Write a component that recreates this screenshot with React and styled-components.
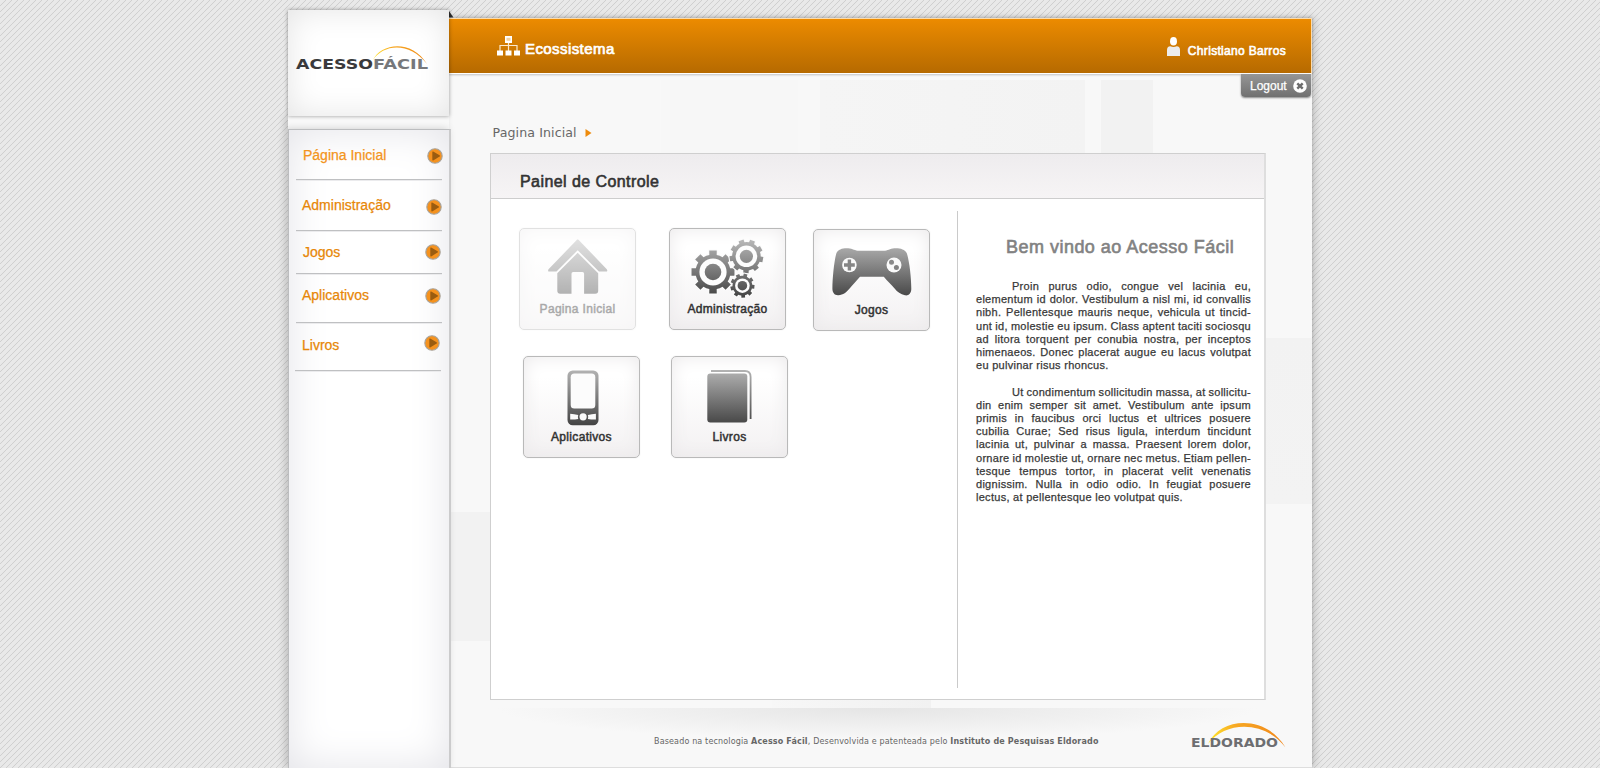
import React from "react";
import styled, { createGlobalStyle } from "styled-components";

const sans = `"Liberation Sans", Arial, sans-serif`;
const verdana = `"DejaVu Sans", Verdana, sans-serif`;

const GlobalStyle = createGlobalStyle`
  * { box-sizing: border-box; }
  html, body { margin: 0; padding: 0; }
  body { font-family: ${sans}; }
  p, h1, h2, ul { margin: 0; padding: 0; font-weight: normal; }
`;

const Page = styled.div`
  height: 768px;
  overflow: hidden;
  background: linear-gradient(135deg, #e9e9e9 41%, #d0d0d0 50%, #e9e9e9 59%) 0 0 / 6px 6px;
`;

const Shell = styled.div`
  display: flex;
  width: 1024px;
  height: 768px;
  margin: 0 auto;
`;

const LeftColumn = styled.div`
  position: relative;
  z-index: 1;
  width: 161px;
  padding-top: 10px;
  display: flex;
  flex-direction: column;
`;

const LogoCard = styled.div`
  height: 106px;
  display: flex;
  align-items: flex-start;
  padding: 30px 0 0 5px;
  background: #fff;
  box-shadow: inset 0 0 32px #e4e4e4, 0 0 4px rgba(0, 0, 0, 0.4);
  z-index: 1;
`;

const LogoGap = styled.div`
  height: 13px;
  background: #f9f9f9;
  box-shadow: -3px 0 7px rgba(0, 0, 0, 0.18);
`;

const Sidebar = styled.nav`
  flex: 1;
  width: 163px;
  padding-left: 7px;
  border: solid #bcbdbf;
  border-width: 1px 0 0 1px;
  border-right: 2px solid #cbcbcc;
  background: #fff;
  box-shadow: inset 0 0 42px #e3e3e8, -3px 0 8px rgba(0, 0, 0, 0.18);
`;

const NavItem = styled.div`
  display: flex;
  justify-content: space-between;
  align-items: flex-start;
  width: 146px;
  height: ${(p) => p.$height}px;
  margin-left: ${(p) => p.$shift || 0}px;
  border-bottom: 1px solid #bfc0c2;
  box-shadow: 0 1px 0 #ebebed;
`;

const NavLabel = styled.span`
  padding: ${(p) => p.$top}px 0 0 ${(p) => p.$left}px;
  font-size: 14px;
  line-height: 16px;
  color: ${(p) => (p.$light ? "#f39420" : "#e78708")};
  -webkit-text-stroke: 0.25px currentColor;
`;

const NavArrow = styled.svg`
  width: 16px;
  height: 16px;
  margin: ${(p) => p.$top}px ${(p) => p.$right}px 0 0;
`;

const Main = styled.main`
  position: relative;
  width: 863px;
  height: 750px;
  margin-top: 18px;
  display: flex;
  flex-direction: column;
  box-shadow: 3px 0 8px rgba(0, 0, 0, 0.16), 0 -1px 3px rgba(0, 0, 0, 0.16);
  background:
    linear-gradient(90deg, #f5f5f5, #f3f3f3) 371px 62px / 265px 73px no-repeat,
    linear-gradient(#f2f2f2, #f2f2f2) 652px 62px / 52px 73px no-repeat,
    linear-gradient(#f7f7f7, #f7f7f7) 212px 62px / 137px 73px no-repeat,
    linear-gradient(#f2f2f2, #f3f3f3) 815px 320px / 48px 166px no-repeat,
    linear-gradient(#f2f2f2, #f2f2f2) 0 494px / 41px 129px no-repeat,
    linear-gradient(90deg, #f7f7f7, #f1f1f1) 323px 680px / 159px 10px no-repeat,
    #f8f8f8;
`;

const Fold = styled.svg`
  position: absolute;
  left: 0;
  top: -7px;
  width: 5px;
  height: 7px;
`;

const TopBar = styled.header`
  height: 56px;
  display: flex;
  align-items: flex-start;
  border: solid #fbdcae;
  border-width: 1px 1px 1px 0;
  border-bottom-color: #fff;
  background: linear-gradient(#ec8b00, #b66a00);
  box-shadow: 0 1px 2px rgba(0, 0, 0, 0.22);
`;

const Section = styled.div`
  display: flex;
  gap: 5px;
  padding: 17px 0 0 48px;
`;

const SectionName = styled.span`
  padding-top: 3px;
  font-size: 15px;
  line-height: 20px;
  letter-spacing: 0.42px;
  color: #fff;
  -webkit-text-stroke: 0.7px #fff;
`;

const User = styled.div`
  display: flex;
  gap: 8px;
  margin-left: auto;
  padding: 18px 25px 0 0;
`;

const UserName = styled.span`
  padding-top: 7px;
  font-size: 12px;
  line-height: 15px;
  letter-spacing: 0.32px;
  color: #fff;
  -webkit-text-stroke: 0.6px #fff;
`;

const LogoutButton = styled.button`
  align-self: flex-end;
  display: flex;
  align-items: center;
  justify-content: space-between;
  width: 70px;
  height: 23px;
  margin-right: 1px;
  padding: 0 4px 0 9px;
  border: 0;
  border-radius: 0 0 4px 4px;
  background: linear-gradient(#969696, #707070);
  box-shadow: 0 1px 2px rgba(0, 0, 0, 0.45);
  font: 12px/14px ${sans};
  color: #fff;
  -webkit-text-stroke: 0.25px #fff;
`;

const Breadcrumb = styled.div`
  display: flex;
  align-items: center;
  gap: 8px;
  height: 18px;
  margin: 27px 0 0 43.500px;
  font: 12.600px/18px ${verdana};
  letter-spacing: 0.1px;
  color: #676767;
`;

const Panel = styled.section`
  width: 776px;
  height: 547px;
  margin: 11px 0 0 41px;
  display: flex;
  flex-direction: column;
  border: 1px solid #cfcfcf;
  border-right: 2px solid #dedede;
  background: #fff;
`;

const PanelHeader = styled.div`
  height: 45px;
  padding: 18px 0 0 29px;
  border-bottom: 1px solid #cdcdcd;
  background: linear-gradient(#eeecee, #f6f4f5);
`;

const PanelTitle = styled.h1`
  font-size: 16px;
  line-height: 20px;
  letter-spacing: 0.43px;
  color: #333;
  -webkit-text-stroke: 0.6px #333;
`;

const PanelBody = styled.div`
  flex: 1;
  display: flex;
  padding-top: 12px;
`;

const Tiles = styled.div`
  width: 466px;
  padding-top: 17px;
`;

const TileRow = styled.div`
  display: flex;
  height: ${(p) => p.$height}px;
  padding-left: ${(p) => p.$left}px;
`;

const Tile = styled.button`
  display: flex;
  flex-direction: column;
  justify-content: flex-start;
  align-items: center;
  width: 117px;
  height: 102px;
  margin: ${(p) => p.$drop || 0}px ${(p) => p.$gap || 0}px 0 0;
  padding: 0;
  border: 1px solid #b9b9b9;
  border-radius: 5px;
  background: linear-gradient(#fff 20%, #f3f1f2);
  box-shadow: inset 0 0 18px #ebe9ea, 0 0 2px #eee;
  opacity: ${(p) => (p.$disabled ? 0.42 : 1)};
`;

const TileIcon = styled.svg`
  display: block;
  width: 115px;
  height: 73px;
`;

const TileLabel = styled.span`
  display: block;
  font: 12px/14px ${sans};
  letter-spacing: 0.32px;
  color: #333;
  -webkit-text-stroke: 0.5px #333;
`;

const Welcome = styled.article`
  height: 477px;
  width: 295px;
  padding: 25px 0 0 18px;
  border-left: 1px solid #cacaca;
`;

const WelcomeTitle = styled.h2`
  padding-left: 30px;
  font-size: 18px;
  line-height: 22px;
  letter-spacing: 0.48px;
  white-space: nowrap;
  color: #828282;
  -webkit-text-stroke: 0.6px #828282;
`;

const Paragraph = styled.p`
  width: 275px;
  margin-top: ${(p) => p.$top}px;
  font-size: 11px;
  line-height: 13.2px;
  letter-spacing: 0.28px;
  color: #383838;
  -webkit-text-stroke: 0.25px #383838;
`;

const Line = styled.span`
  display: block;
  white-space: nowrap;
  text-align: justify;
  text-align-last: ${(p) => (p.$last ? "left" : "justify")};
  word-spacing: ${(p) => (p.$last ? 0 : -0.5)}px;
  padding-left: ${(p) => (p.$indent ? 36 : 0)}px;
`;

const Footer = styled.footer`
  flex: 1;
  display: flex;
  margin-top: 8px;
  border-bottom: 1px solid #dedede;
  background: radial-gradient(ellipse 380px 32px at 428px 0, #e5e5e5, #f8f8f8);
`;

const Credits = styled.p`
  width: 447px;
  margin: 28px 0 0 205px;
  font: 8px/12px ${verdana};
  letter-spacing: 0.155px;
  white-space: nowrap;
  color: #666;
`;

const EldoradoLogo = styled.svg`
  width: 100px;
  height: 32px;
  margin: 12px 0 0 90px;
`;

const nav = [
  { label: "Página Inicial", height: 50, top: 17, left: 7, iconTop: 18, iconRight: -1, light: true },
  { label: "Administração", height: 51, top: 17, left: 6, iconTop: 19, iconRight: 0 },
  { label: "Jogos", height: 43, top: 13, left: 7, iconTop: 13, iconRight: 1 },
  { label: "Aplicativos", height: 49, top: 13, left: 6, iconTop: 13.5, iconRight: 1 },
  { label: "Livros", height: 48, top: 14, left: 7, iconTop: 11.5, iconRight: 1, shift: -1 },
];

const paragraphs = [
  [
    "Proin purus odio, congue vel lacinia eu,",
    "elementum id dolor. Vestibulum a nisl mi, id convallis",
    "nibh. Pellentesque mauris neque, vehicula ut tincid-",
    "unt id, molestie eu ipsum. Class aptent taciti sociosqu",
    "ad litora torquent per conubia nostra, per inceptos",
    "himenaeos. Donec placerat augue eu lacus volutpat",
    "eu pulvinar risus rhoncus.",
  ],
  [
    "Ut condimentum sollicitudin massa, at sollicitu-",
    "din enim semper sit amet. Vestibulum ante ipsum",
    "primis in faucibus orci luctus et ultrices posuere",
    "cubilia Curae; Sed risus ligula, interdum tincidunt",
    "lacinia ut, pulvinar a massa. Praesent lorem dolor,",
    "ornare id molestie ut, ornare nec metus. Etiam pellen-",
    "tesque tempus tortor, in placerat velit venenatis",
    "dignissim. Nulla in odio odio. In feugiat posuere",
    "lectus, at pellentesque leo volutpat quis.",
  ],
];

function gearPath(cx, cy, outer, body, teeth, turn = 0) {
  const step = (Math.PI * 2) / teeth;
  const at = (r, a) => `${(cx + r * Math.cos(a)).toFixed(2)} ${(cy + r * Math.sin(a)).toFixed(2)}`;
  const pts = [];
  for (let i = 0; i < teeth; i++) {
    const a = i * step + turn;
    pts.push(at(body, a - step * 0.27), at(outer, a - step * 0.22), at(outer, a + step * 0.22), at(body, a + step * 0.27), at(body, a + step * 0.5));
  }
  return `M${pts.join("L")}Z`;
}

const Gear = ({ cx, cy, outer, body, hole, disc, teeth, turn }) => (
  <>
    <path d={gearPath(cx, cy, outer, body, teeth, turn)} fill="url(#iconShade)" stroke="#fbfbfb" strokeWidth="2.2" paintOrder="stroke" strokeLinejoin="round" />
    <circle cx={cx} cy={cy} r={hole} fill="#fdfdfd" />
    <circle cx={cx} cy={cy} r={disc} fill="url(#iconShade)" />
  </>
);

const ShadeDefs = () => (
  <defs>
    <linearGradient id="iconShade" gradientUnits="userSpaceOnUse" x1="0" y1="12" x2="0" y2="68">
      <stop offset="0" stopColor="#b5b5b5" />
      <stop offset="1" stopColor="#444" />
    </linearGradient>
  </defs>
);

const icons = {
  home: (
    <g fill="url(#iconShade)">
      <path d="M57.2 10.6Q57.9 10.2 58.5 10.7L86.8 40.2Q88.1 42.6 86.1 42.6H78.9L57.7 21.2 36.5 42.6H29.3Q27.4 42.6 28.5 40.2Z" />
      <path d="M57.7 23.8L78.2 44.2V61.7Q78.2 64.7 75.2 64.7H64.1V44.7Q64.1 43 62.5 43H53.1Q51.5 43 51.5 44.7V64.7H40.3Q37.3 64.7 37.3 61.7V44.2Z" />
    </g>
  ),
  gears: (
    <>
      <Gear cx={43} cy={43} outer={21.8} body={17.5} hole={13.6} disc={8.3} teeth={8} />
      <Gear cx={76.4} cy={27.3} outer={17} body={14.3} hole={10.8} disc={6.6} teeth={9} turn={0.2} />
      <Gear cx={72.4} cy={56.7} outer={12.2} body={9.9} hole={7.3} disc={4.8} teeth={9} turn={0.1} />
    </>
  ),
  gamepad: (
    <>
      <path
        fill="url(#iconShade)"
        d="M22.3 23.4C24 19.5 28 18.2 32.5 18.2C37.5 18.2 40 20 43.6 20.8H71C74.6 20 77 18.2 82 18.2C86.7 18.2 91 19.5 92.9 23.4C95.5 32 97.3 48 97.3 59C97.2 63.4 94.4 66 91 65.3C86.5 64.6 83.4 62 80.6 58.6C77 54 73.6 51.5 69.8 46.8H46C42 51.5 38.7 54.5 35.6 58.6C32.6 62.4 29.2 65 24.4 65.3C20.4 65.5 18.4 62.7 18.4 58.6C18.5 48 20 32 22.3 23.4Z"
      />
      <circle cx="35.4" cy="35" r="7.3" fill="#fafafa" />
      <path d="M33.7 29.6h3.4v3.7h3.7v3.4h-3.7v3.7h-3.4v-3.7H30v-3.4h3.7z" fill="#858585" />
      <circle cx="80" cy="35" r="7.5" fill="#fafafa" />
      <circle cx="77.5" cy="32.2" r="2.5" fill="#8a8a8a" />
      <circle cx="82.4" cy="37.5" r="2.5" fill="#828282" />
    </>
  ),
  phone: (
    <>
      <rect x="43.5" y="13.5" width="31" height="54.7" rx="5.2" fill="url(#iconShade)" />
      <rect x="46.7" y="16.6" width="24.6" height="35" rx="3.6" fill="#fcfcfc" />
      <path d="M46.2 56.8q4 .2 8 1.3a6 6 0 0 0 0 3.8q-4 .8-8 .6zM71.9 56.8q-4 .2-8 1.3a6 6 0 0 1 0 3.8q4 .8 8 .6z" fill="#fafafa" />
      <circle cx="59.1" cy="59.8" r="3.6" fill="#fafafa" />
    </>
  ),
  book: (
    <>
      <rect x="35.3" y="16.4" width="40" height="49.2" rx="3" fill="url(#iconShade)" />
      <path d="M39 14H73Q78.600 14 78.600 20V62" fill="none" stroke="url(#iconShade)" strokeWidth="1.8" />
    </>
  ),
};

const AppTile = ({ icon, label, ...rest }) => (
  <Tile {...rest}>
    <TileIcon viewBox="0 0 115 73">
      <ShadeDefs />
      {icons[icon]}
    </TileIcon>
    <TileLabel>{label}</TileLabel>
  </Tile>
);

const AcessoFacilLogo = () => (
  <svg width="136" height="40" viewBox="0 0 136 40">
    <defs>
      <linearGradient id="arcA">
        <stop offset="0" stopColor="#ffe92e" />
        <stop offset="0.35" stopColor="#f7a823" />
        <stop offset="1" stopColor="#ef8a16" />
      </linearGradient>
    </defs>
    <path d="M79.5 20.5C88 2.500 119 -1 134 24C117 2 91 3 79.500 20.500Z" fill="url(#arcA)" />
    <g fontFamily={verdana} fontWeight="bold" fontSize="13.500">
      <text x="3" y="29.300" textLength="77" lengthAdjust="spacingAndGlyphs" fill="#3a3a3c">ACESSO</text>
      <text x="80" y="29.300" textLength="55" lengthAdjust="spacingAndGlyphs" fill="#77787b">FÁCIL</text>
    </g>
  </svg>
);

export default function App() {
  return (
    <Page>
      <GlobalStyle />
      <Shell>
        <LeftColumn>
          <LogoCard>
            <AcessoFacilLogo />
          </LogoCard>
          <LogoGap />
          <Sidebar>
            {nav.map((n) => (
              <NavItem key={n.label} $height={n.height} $shift={n.shift}>
                <NavLabel $top={n.top} $left={n.left} $light={n.light}>{n.label}</NavLabel>
                <NavArrow viewBox="0 0 16 16" $top={n.iconTop} $right={n.iconRight}>
                  <circle cx="8" cy="8" r="7.2" fill="#f5921e" stroke="#a8a29a" strokeWidth="1.1" />
                  <path d="M5.300 4.100Q5.300 3.200 6.200 3.600L12.600 7.200Q13.400 7.900 12.600 8.500L6.200 12.400Q5.300 12.700 5.300 11.800Z" fill="#9a5c10" />
                </NavArrow>
              </NavItem>
            ))}
          </Sidebar>
        </LeftColumn>

        <Main>
          <Fold viewBox="0 0 5 7">
            <path d="M0 0L4.500 6.500H0Z" fill="#2e2e2e" />
          </Fold>
          <TopBar>
            <Section>
              <svg width="23" height="20" viewBox="0 0 23 20">
                <path d="M11.500 6V15M3 15V9.500H20V15" fill="none" stroke="#fbe9cf" strokeWidth="1.200" />
                <rect x="8" y="0" width="7" height="7" fill="#fff" />
                <rect x="9.500" y="1.800" width="4" height="3" fill="#f3d3a0" />
                <path d="M0 14.500h6v5H0zM8.500 14.500h6v5h-6zM17 14.500h6v5h-6z" fill="#fff" />
              </svg>
              <SectionName>Ecossistema</SectionName>
            </Section>
            <User>
              <svg width="13" height="19" viewBox="0 0 13 19">
                <ellipse cx="6.500" cy="4.300" rx="3.500" ry="4.300" fill="#fff" />
                <path d="M0 19V13Q0 9.500 3.300 9.200Q6.500 10.600 9.700 9.200Q13 9.500 13 13V19Z" fill="#ececec" />
              </svg>
              <UserName>Christiano Barros</UserName>
            </User>
          </TopBar>
          <LogoutButton>
            Logout
            <svg width="14" height="14" viewBox="0 0 14 14">
              <circle cx="7" cy="7" r="6.800" fill="#fff" />
              <path d="M4.300 4.300L9.700 9.700M9.700 4.300L4.300 9.700" stroke="#6d6d6d" strokeWidth="2.400" />
            </svg>
          </LogoutButton>
          <Breadcrumb>
            Pagina Inicial
            <svg width="7" height="8" viewBox="0 0 7 8">
              <path d="M0.500 0L6.500 4L0.500 8Z" fill="#ee8b0c" />
            </svg>
          </Breadcrumb>

          <Panel>
            <PanelHeader>
              <PanelTitle>Painel de Controle</PanelTitle>
            </PanelHeader>
            <PanelBody>
              <Tiles>
                <TileRow $height={128} $left={28}>
                  <AppTile icon="home" label="Pagina Inicial" $disabled $gap={33} />
                  <AppTile icon="gears" label="Administração" $gap={27} />
                  <AppTile icon="gamepad" label="Jogos" $drop={1} />
                </TileRow>
                <TileRow $height={102} $left={32}>
                  <AppTile icon="phone" label="Aplicativos" $gap={31} />
                  <AppTile icon="book" label="Livros" />
                </TileRow>
              </Tiles>
              <Welcome>
                <WelcomeTitle>Bem vindo ao Acesso Fácil</WelcomeTitle>
                {paragraphs.map((lines, i) => (
                  <Paragraph key={i} $top={i ? 13.2 : 22}>
                    {lines.map((line, j) => (
                      <Line key={line} $indent={j === 0} $last={j === lines.length - 1}>{line}</Line>
                    ))}
                  </Paragraph>
                ))}
              </Welcome>
            </PanelBody>
          </Panel>

          <Footer>
            <Credits>
              Baseado na tecnologia <b>Acesso Fácil</b>, Desenvolvida e patenteada pelo <b>Instituto de Pesquisas Eldorado</b>
            </Credits>
            <EldoradoLogo viewBox="0 0 100 32">
              <defs>
                <linearGradient id="arcB">
                  <stop offset="0" stopColor="#ffe92e" />
                  <stop offset="0.35" stopColor="#f7a823" />
                  <stop offset="1" stopColor="#f0861a" />
                </linearGradient>
              </defs>
              <path d="M17 24C30 -4 76 -5 94.500 27.500C75 1 35 0 17 24Z" fill="url(#arcB)" />
              <text x="0" y="27" fontFamily={verdana} fontWeight="bold" fontSize="12" fill="#6d6e71" textLength="87" lengthAdjust="spacingAndGlyphs">ELDORADO</text>
            </EldoradoLogo>
          </Footer>
        </Main>
      </Shell>
    </Page>
  );
}
